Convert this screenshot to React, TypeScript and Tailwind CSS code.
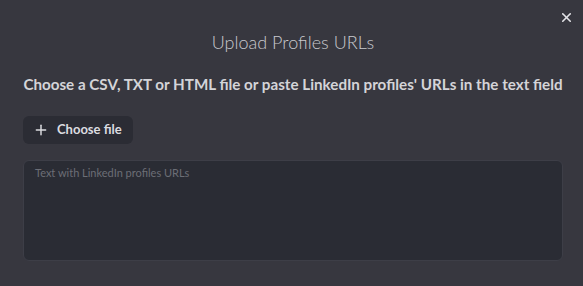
import { X, Plus } from 'lucide-react'

export default function App() {
  return (
    <div className="relative flex h-[286px] w-[583px] flex-col bg-[#37373f] pl-[23px] pr-[20px] font-['Lato',sans-serif] text-[#d8d8dc]">
      <button className="absolute right-[9px] top-[10px] text-[#e4e4e8]">
        <X size={15} strokeWidth={2.5} />
      </button>

      <h2 className="mt-[30px] text-center text-[18px] font-light leading-[24px] text-[#c9c9ce]">Upload Profiles URLs</h2>

      <p className="mt-[21px] text-center text-[15.2px] font-bold leading-[18px] text-[#d4d4d8]">
        Choose a CSV, TXT or HTML file or paste LinkedIn profiles' URLs in the text field
      </p>

      <div className="mt-[23px] flex">
        <button className="flex h-[28px] items-center gap-[8px] rounded-[6px] bg-[#2b2c34] pl-[10px] pr-[11px] text-[13px] font-bold text-[#dcdce0]">
          <Plus size={16} strokeWidth={2.2} />
          <span>Choose file</span>
        </button>
      </div>

      <textarea
        className="mt-[16px] h-[101px] w-full resize-none rounded-[6px] border border-[#3d3e47] bg-[#2a2c34] px-[11px] pb-[6px] pt-[4px] text-[11px] text-[#d8d8dc] outline-none placeholder:text-[#6c6e76]"
        placeholder="Text with LinkedIn profiles URLs"
      />
    </div>
  )
}
